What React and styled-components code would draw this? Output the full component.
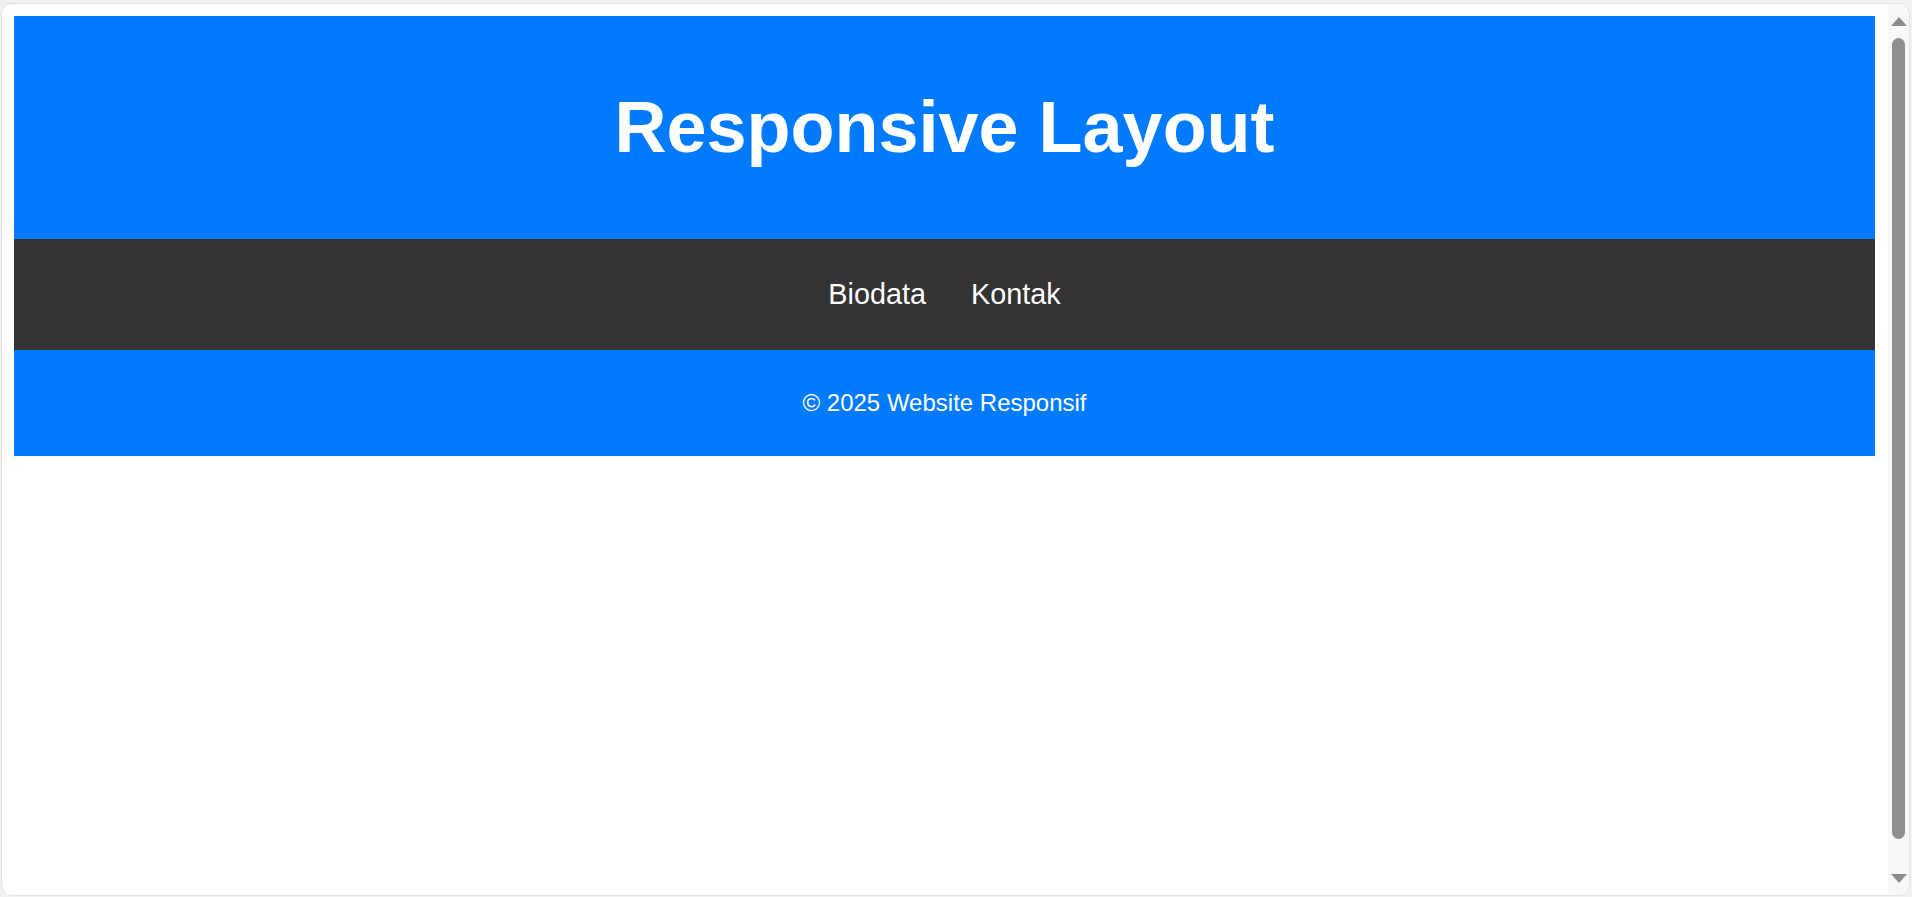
import styled, { createGlobalStyle } from 'styled-components';

const GlobalStyle = createGlobalStyle`
  html, body {
    margin: 0;
    padding: 0;
    background: #f1f1f1;
    font-family: "Liberation Sans", Arial, sans-serif;
  }
`;

const Frame = styled.div`
  box-sizing: border-box;
  margin: 3px 2px 1px 1px;
  height: 893px;
  display: flex;
  background: #ffffff;
  border: 1px solid #e2e2e2;
  border-radius: 11px;
  overflow: hidden;
`;

const Page = styled.div`
  flex: 1;
  padding: 12px 13px 0 12px;
`;

const Header = styled.header`
  background: #007bff;
  color: #ffffff;
  text-align: center;
  padding: 70px 0;

  h1 {
    margin: 0;
    font-size: 72px;
    font-weight: bold;
    line-height: 83px;
  }
`;

const Nav = styled.nav`
  background: #333333;
  height: 111px;
  display: flex;
  justify-content: center;
  align-items: center;
  gap: 45px;
`;

const NavLink = styled.a`
  color: #ffffff;
  font-size: 28.8px;
  text-decoration: none;
`;

const Footer = styled.footer`
  background: #007bff;
  color: #ffffff;
  height: 106px;
  display: flex;
  justify-content: center;
  align-items: center;
  font-size: 24px;
`;

const Scrollbar = styled.div`
  width: 21px;
  background: #f7f7f7;
  display: flex;
  flex-direction: column;
  align-items: center;
  padding: 13px 0 12px;
`;

const Arrow = styled.div`
  width: 0;
  height: 0;
  border-left: 8px solid transparent;
  border-right: 8px solid transparent;
  ${p => p.$down
    ? 'border-top: 9px solid #8d8d8d;'
    : 'border-bottom: 9px solid #8d8d8d;'}
`;

const Thumb = styled.div`
  width: 13px;
  flex: 1;
  margin: 12px 0 35px;
  background: #8f8f8f;
  border-radius: 7px;
`;

export default function App() {
  return (
    <>
      <GlobalStyle />
      <Frame>
        <Page>
          <Header>
            <h1>Responsive Layout</h1>
          </Header>
          <Nav>
            <NavLink href="#">Biodata</NavLink>
            <NavLink href="#">Kontak</NavLink>
          </Nav>
          <Footer>© 2025 Website Responsif</Footer>
        </Page>
        <Scrollbar>
          <Arrow />
          <Thumb />
          <Arrow $down />
        </Scrollbar>
      </Frame>
    </>
  );
}
